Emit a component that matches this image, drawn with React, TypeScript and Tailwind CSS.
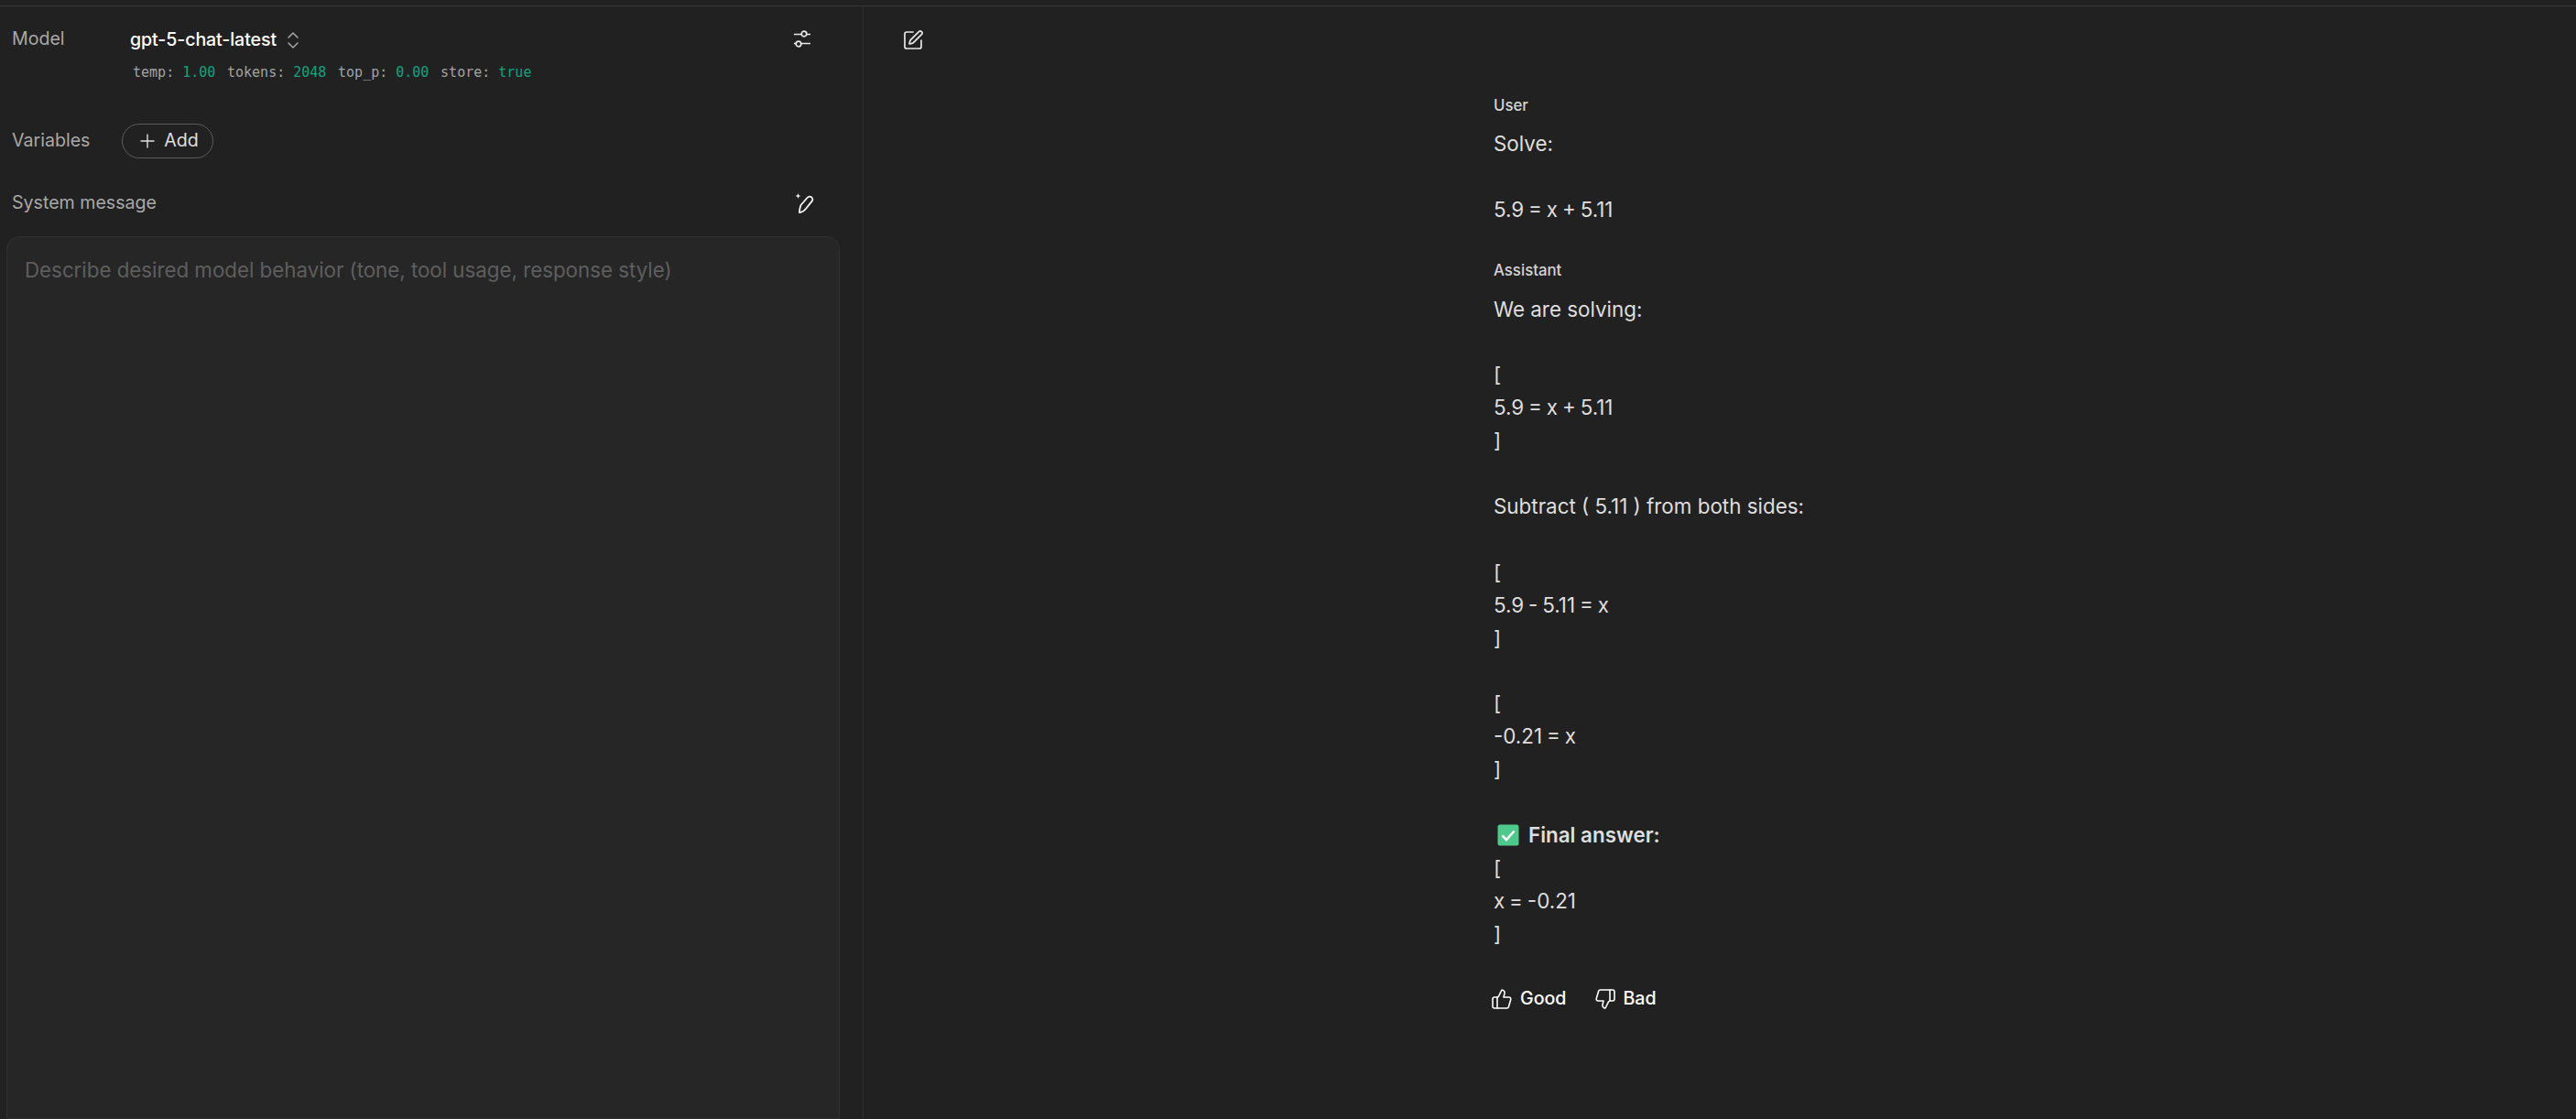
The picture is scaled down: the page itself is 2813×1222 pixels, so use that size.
import React from 'react';
import { ChevronsUpDown, Plus, SquarePen, ThumbsUp, ThumbsDown } from 'lucide-react';

const SANS = 'font-["Inter",sans-serif]';

function Param({ name, value }: { name: string; value: string }) {
  return (
    <span className="mr-[12.700px]">
      <span className="text-[#a3a3a3]">{name}: </span>
      <span className="text-[#10a37f]">{value}</span>
    </span>
  );
}

function Sliders() {
  return (
    <svg viewBox="0 0 18 19" className="w-[18px] h-[19px]" fill="none" stroke="#e8e8e8" strokeWidth="1.700">
      <path d="M0 4.500H8M14 4.500H18M0 14.500H2M8 14.500H18" />
      <circle cx="11" cy="4" r="2.800" />
      <circle cx="5" cy="15" r="2.800" />
    </svg>
  );
}

function MagicPen() {
  return (
    <svg viewBox="0 0 21 22" className="w-[21px] h-[22px]" fill="none" stroke="#f5f5f5" strokeWidth="1.800" strokeLinejoin="round">
      <path d="M6.500 13 13.500 5c1.200-1.400 3-1.700 4.500-.7 1.500 1 1.700 3 .7 4.300L12 17c-1.300 1.700-3.100 3-5.200 3.600l-1.800.5.100-1.900c.1-2.200.9-4.500 1.400-6.200Z" />
      <path d="M3.500 0 4.300 2.200 6.500 3 4.300 3.800 3.500 6 2.700 3.800.5 3 2.700 2.200Z" fill="#f5f5f5" stroke="none" />
    </svg>
  );
}

function Lines({ items }: { items: string[] }) {
  return (
    <div>
      {items.map((line, i) => (
        <div key={i} className={`h-[35.900px] leading-[35.900px] ${line.includes('=') ? '[word-spacing:-1.400px]' : ''}`}>{line}</div>
      ))}
    </div>
  );
}

function CheckEmoji() {
  return (
    <svg viewBox="0 0 24 24" className="w-[24px] h-[24px] ml-[4px] mr-[10px] shrink-0">
      <rect x="0.500" y="0.500" width="23" height="23" rx="2.500" fill="#4fc98b" />
      <path d="M5.500 12.500 10 17 18.500 7.500" fill="none" stroke="#ffffff" strokeWidth="2.600" />
    </svg>
  );
}

export default function App() {
  return (
    <div className={`${SANS} h-[1222px] w-full overflow-hidden bg-[#212121] text-[#dedede]`}>
      <div className="h-[7px] border-b border-[#383838]" />
      <div className="flex h-[1215px]">
        {/* left panel */}
        <div className="w-[943px] shrink-0 border-r border-[#303030] flex flex-col">
          <div className="flex pl-[13px] pr-[57px] pt-[20px] h-[94px]">
            <div className="w-[129px] text-[19.600px] leading-[30px] text-[#a8a8a8]">Model</div>
            <div className="flex-1">
              <div className="flex items-center h-[34px]">
                <span className="text-[19.600px] font-medium text-white tracking-[-0.100px]">gpt-5-chat-latest</span>
                <ChevronsUpDown className="w-[24px] h-[24px] ml-[6px] text-[#a8a8a8]" strokeWidth={1.500} />
              </div>
              <div className="mt-[8px] pl-[3px] font-['DejaVu_Sans_Mono',monospace] text-[15px] leading-[20px] whitespace-nowrap">
                <Param name="temp" value="1.00" />
                <Param name="tokens" value="2048" />
                <Param name="top_p" value="0.00" />
                <Param name="store" value="true" />
              </div>
            </div>
            <div className="mt-[6px]"><Sliders /></div>
          </div>

          <div className="flex items-center pl-[13px] h-[42px] mt-[32px]">
            <div className="w-[120px] text-[19.600px] text-[#a8a8a8]">Variables</div>
            <div className="flex items-center h-[38px] w-[100px] justify-center rounded-full border border-[#5c5c5c] text-[19.600px]">
              <Plus className="w-[24px] h-[24px] mr-[6px]" strokeWidth={1.400} />
              Add
            </div>
          </div>

          <div className="flex items-center justify-between pl-[13px] pr-[53px] h-[36px] mt-[29px]">
            <div className="text-[19.600px] text-[#a8a8a8]">System message</div>
            <MagicPen />
          </div>

          <div className="ml-[7px] mr-[25px] mt-[18px] flex-1 rounded-t-[14px] border border-[#303030] bg-[#262626] px-[19px] pt-[19px] text-[22.400px] tracking-[-0.050px] leading-[34px] text-[#5e5e5e]">
            Describe desired model behavior (tone, tool usage, response style)
          </div>
        </div>

        {/* right panel */}
        <div className="flex-1 relative">
          <div className="pl-[42px] pt-[25px] h-[97px]">
            <SquarePen className="w-[24px] h-[24px] text-[#e8e8e8]" strokeWidth={1.700} />
          </div>
          <div className="ml-[688px] w-[800px] text-[22.400px]">
            <div className="text-[16.800px] font-medium leading-[22px] text-[#d4d4d4]">User</div>
            <div className="mt-[13px]">
              <Lines items={['Solve:', '', '5.9 = x + 5.11']} />
            </div>
            <div className="mt-[37px] text-[16.800px] font-medium leading-[22px] text-[#d4d4d4]">Assistant</div>
            <div className="mt-[14px]">
              <Lines items={['We are solving:', '', '[', '5.9 = x + 5.11', ']', '', 'Subtract ( 5.11 ) from both sides:', '', '[', '5.9 - 5.11 = x', ']', '', '[', '-0.21 = x', ']', '']} />
              <div className="flex items-center h-[36px] font-semibold">
                <CheckEmoji />
                Final answer:
              </div>
              <Lines items={['[', 'x = -0.21', ']']} />
            </div>
            <div className="flex items-center mt-[35px] h-[36px] text-[19.600px] font-medium text-white">
              <ThumbsUp className="w-[24px] h-[24px] ml-[-3px] mr-[8px]" strokeWidth={1.600} />
              Good
              <ThumbsDown className="w-[24px] h-[24px] ml-[31px] mr-[7px]" strokeWidth={1.600} />
              Bad
            </div>
          </div>
        </div>
      </div>
    </div>
  );
}
